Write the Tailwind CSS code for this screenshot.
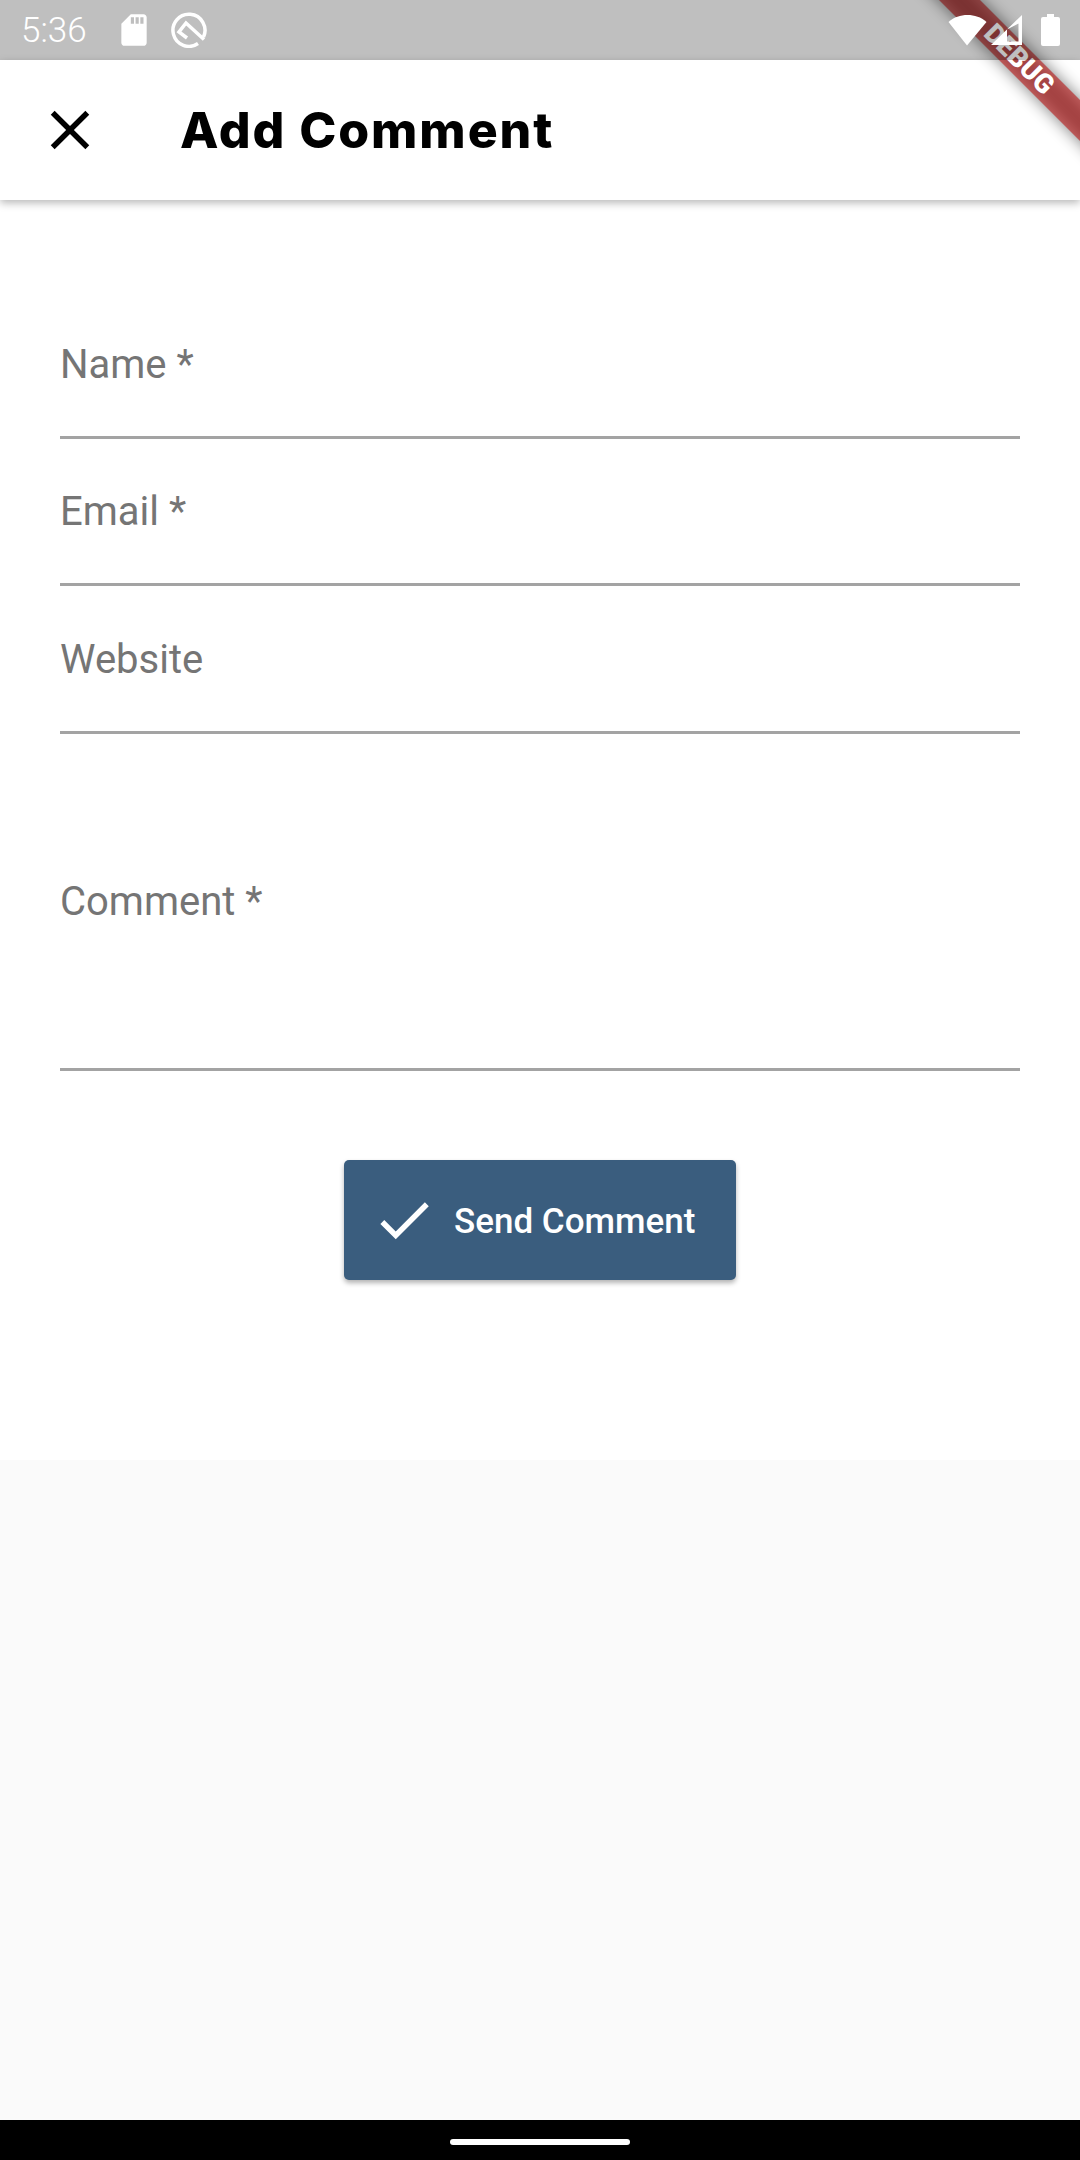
<!DOCTYPE html>
<html lang="en">
<head>
    <meta charset="UTF-8">
    <meta name="viewport" content="width=device-width, initial-scale=1.0">
    <title>Add Comment</title>
    <script src="https://cdn.jsdelivr.net/npm/@tailwindcss/browser@4"></script>
</head>
<body class="relative w-[1080px] h-[2160px] overflow-hidden bg-white font-['Roboto',sans-serif] flex flex-col">

    <!-- status bar, sits over the app and the debug banner -->
    <div class="relative z-30 h-[60px] shrink-0 bg-black/25 flex items-center text-white">
        <span class="ml-[21px] text-[35px] leading-none font-light">5:36</span>
        <svg class="ml-[28px] w-[38px] h-[38px]" viewBox="0 0 24 24" fill="#fff"><path d="M18 2h-8L4.020 8 4 20c0 1.100.9 2 2 2h12c1.100 0 2-.9 2-2V4c0-1.100-.9-2-2-2zm-6 6h-2V4h2v4zm3 0h-2V4h2v4zm3 0h-2V4h2v4z"/></svg>
        <svg class="ml-[18px] w-[36px] h-[36px]" viewBox="0 0 36 36" fill="none" stroke="#fff" stroke-width="3.500"><path d="M27 31.500A16 16 0 1 1 32.500 25"/><path d="M33 27.500 L15 11 L8 20 L16 26"/></svg>
        <svg class="ml-auto w-[40px] h-[32px]" viewBox="0 0 40 32" fill="#fff"><path d="M0.500 8C6 3 12.500 1 19.500 1S33 3 38.500 8L19 31.500z"/></svg>
        <svg class="ml-[2px] w-[34px] h-[32px]" viewBox="0 0 34 32" fill="#fff"><path fill-rule="evenodd" d="M1 31 L32 1 V31 Z M17 15.500 V27.500 H28.500 V9.500 Z"/></svg>
        <svg class="ml-[17px] mr-[20px] w-[19px] h-[32px]" viewBox="0 0 19 32" fill="#fff"><path d="M6 0h7v3h4a2 2 0 0 1 2 2v25a2 2 0 0 1-2 2H2a2 2 0 0 1-2-2V5a2 2 0 0 1 2-2h4z"/></svg>
    </div>

    <!-- app bar -->
    <div class="relative z-10 h-[140px] shrink-0 bg-white flex items-center pl-[37px] shadow-[0_3px_8px_rgba(0,0,0,0.28)]">
        <svg class="w-[66px] h-[66px]" viewBox="0 0 24 24" fill="#000"><path d="M19 6.410 17.590 5 12 10.590 6.410 5 5 6.410 10.590 12 5 17.590 6.410 19 12 13.410 17.590 19 19 17.590 13.410 12z"/></svg>
        <h1 class="ml-[77px] text-[50px] leading-none font-extrabold text-black tracking-[1.9px] font-['Inter',sans-serif]">Add Comment</h1>
    </div>

    <!-- form -->
    <div class="h-[1260px] shrink-0 bg-white px-[60px] pt-[90px]">
        <div class="h-[149px] flex flex-col justify-end pb-[47px] border-b-[3px] border-[#a3a3a3] text-[40px] leading-[48px] text-[#757575]">Name *</div>
        <div class="h-[147px] flex flex-col justify-end pb-[47px] border-b-[3px] border-[#a3a3a3] text-[40px] leading-[48px] text-[#757575]">Email *</div>
        <div class="h-[148px] flex flex-col justify-end pb-[47px] border-b-[3px] border-[#a3a3a3] text-[40px] leading-[48px] text-[#757575]">Website</div>
        <div class="h-[337px] flex flex-col justify-end pb-[142px] border-b-[3px] border-[#a3a3a3] text-[40px] leading-[48px] text-[#757575]">Comment *</div>

        <button class="mt-[89px] mx-auto w-[392px] h-[120px] rounded-[5px] bg-[#3a5d7e] text-white flex items-center pl-[27px] shadow-[0_3px_5px_rgba(0,0,0,0.3)]">
            <svg class="w-[66px] h-[66px]" viewBox="0 0 24 24" fill="#fff"><path d="M9 16.170 4.830 12l-1.420 1.410L9 19 21 7l-1.410-1.410z"/></svg>
            <span class="ml-[17px] mt-[2px] text-[35px] leading-none font-medium">Send Comment</span>
        </button>
    </div>

    <div class="flex-1 bg-[#fafafa]"></div>

    <!-- nav bar -->
    <div class="h-[40px] shrink-0 bg-black flex justify-center pt-[19px]">
        <div class="w-[180px] h-[6px] rounded-full bg-white"></div>
    </div>

    <!-- debug banner -->
    <div class="absolute inset-0 z-20 overflow-hidden pointer-events-none">
        <div class="absolute left-[819px] top-[45px] w-[400px] h-[29px] rotate-45 bg-black/50 blur-[8px]"></div>
        <div class="absolute left-[819px] top-[45px] w-[400px] h-[29px] rotate-45 bg-[#b71c1c]/63 flex items-center justify-center text-white text-[27px] leading-none font-black">DEBUG</div>
    </div>
</body>
</html>
